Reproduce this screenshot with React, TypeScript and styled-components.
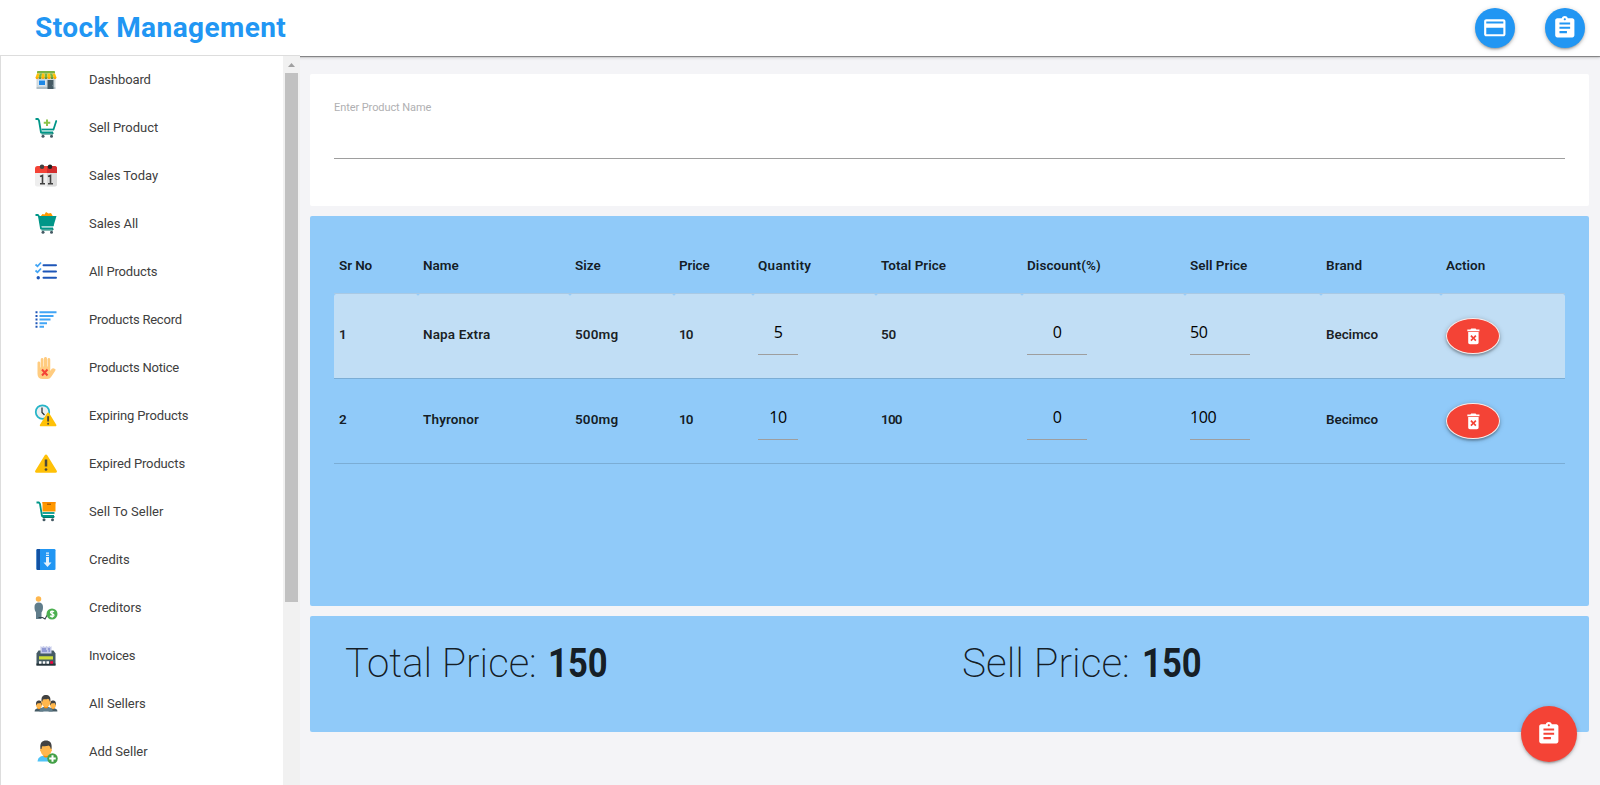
import React from "react";
import styled, { createGlobalStyle } from "styled-components";
import { FcShop } from "react-icons/fc";
import { MdPayment, MdAssignment, MdDeleteForever } from "react-icons/md";

const GlobalStyle = createGlobalStyle`
  *, *::before, *::after { box-sizing: border-box; }
  body {
    margin: 0;
    background: #f4f4f7;
    color: rgba(0, 0, 0, 0.87);
    font-family: Roboto, "Liberation Sans", sans-serif;
    overflow: hidden;
  }
`;

const Page = styled.div`
  display: flex;
  flex-direction: column;
  height: 785px;
`;

const Header = styled.header`
  position: relative;
  flex: none;
  height: 56px;
  display: flex;
  align-items: center;
  padding: 0 15px 0 35px;
  background: #fff;
  box-shadow: 0 1px 1px rgba(0, 0, 0, 0.38), 0 2px 3px rgba(0, 0, 0, 0.14);
`;

const Brand = styled.h1`
  flex: 1;
  margin: 0;
  font-size: 28px;
  line-height: 54px;
  font-weight: 700;
  letter-spacing: 0.42px;
  color: #2196f3;
`;

const HeaderActions = styled.div`
  display: flex;
  gap: 30px;
`;

const RoundButton = styled.button<{ $size: number; $color: string }>`
  width: ${(p) => p.$size}px;
  height: ${(p) => p.$size}px;
  display: flex;
  align-items: center;
  justify-content: center;
  padding: 0;
  border: 0;
  border-radius: 50%;
  background: ${(p) => p.$color};
  color: #fff;
  font-size: 25.6px;
  box-shadow: 0 2px 2px rgba(0, 0, 0, 0.14), 0 3px 1px -2px rgba(0, 0, 0, 0.12),
    0 1px 5px rgba(0, 0, 0, 0.2);
`;

const FloatingAction = styled.div`
  position: fixed;
  right: 23px;
  bottom: 23px;
`;

const Body = styled.div`
  flex: 1;
  min-height: 0;
  display: flex;
`;

const Sidebar = styled.nav`
  position: relative;
  flex: none;
  width: 300px;
  margin-top: -1px;
  display: flex;
  background: #fff;
  border-top: 1px solid #ddd;
  border-left: 1px solid #ddd;
  overflow: hidden;
`;

const MenuList = styled.ul`
  flex: 1;
  margin: 0;
  padding: 0;
  list-style: none;
`;

const MenuItem = styled.li`
  height: 48px;
  display: flex;
  align-items: center;
  gap: 31px;
  padding: 0 0 1px 33px;
  font-size: 13px;
  font-weight: 370;
  color: #404040;

  svg {
    flex: none;
    width: 24px;
    height: 24px;
  }
`;

const MenuLabel = styled.span<{ $spacing: number }>`
  letter-spacing: ${(p) => p.$spacing}px;
  white-space: nowrap;
`;

const ScrollTrack = styled.div`
  width: 17px;
  display: flex;
  flex-direction: column;
  align-items: center;
  background: #f1f1f1;
`;

const ScrollArrow = styled.svg`
  width: 7px;
  height: 4px;
  margin: 7px 0 6px;
`;

const ScrollThumb = styled.div`
  width: 13px;
  height: 529px;
  background: #c1c1c1;
`;

const Main = styled.main`
  flex: 1;
  display: flex;
  flex-direction: column;
  gap: 10px;
  padding: 18px 11px 0 10px;
`;

const Card = styled.section<{ $height: number; $blue?: boolean }>`
  height: ${(p) => p.$height}px;
  padding: 24px;
  border-radius: 2px;
  background: ${(p) => (p.$blue ? "#90caf9" : "#fff")};
`;

const Field = styled.label`
  height: 61px;
  display: block;
  padding-top: 2px;
  border-bottom: 1px solid #9e9e9e;
  font-size: 11px;
  line-height: 16px;
  letter-spacing: -0.08px;
  color: #b0b0b2;
`;

const Table = styled.table`
  width: 1231px;
  table-layout: fixed;
  border-collapse: separate;
  border-spacing: 0;
  font-size: 13.5px;
  font-weight: 600;
  text-align: left;
`;

const HeadCell = styled.th<{ $width: number; $spacing: number }>`
  width: ${(p) => p.$width}px;
  height: 54px;
  padding: 0 5px 4px;
  border-bottom: 1px solid #a9c9e4;
  font-weight: 600;
  letter-spacing: ${(p) => p.$spacing}px;
`;

const Row = styled.tr<{ $striped: boolean }>`
  td {
    background: ${(p) => (p.$striped ? "rgba(242, 242, 242, 0.5)" : "none")};
    background-clip: padding-box;
  }
`;

const Cell = styled.td<{ $spacing?: number }>`
  height: 85px;
  padding: 0 5px 4px;
  border-bottom: 1px solid rgba(0, 0, 0, 0.14);
  border-radius: 2px 2px 0 0;
  vertical-align: middle;
  letter-spacing: ${(p) => p.$spacing ?? -0.1}px;
`;

const ActionCell = styled(Cell)`
  padding-bottom: 0;
`;

const CellInput = styled.input<{ $width: number; $align: string }>`
  display: block;
  width: ${(p) => p.$width}px;
  height: 43px;
  margin-top: -1px;
  padding: 0 0 2px;
  border: 0;
  border-bottom: 1px solid #9e9e9e;
  outline: 0;
  background: transparent;
  font: 370 16px "Open Sans", "Noto Sans", sans-serif;
  letter-spacing: -0.4px;
  color: #000;
  text-align: ${(p) => p.$align};
`;

const DeleteButton = styled.button`
  width: 54px;
  height: 36px;
  display: flex;
  align-items: center;
  justify-content: center;
  padding: 1px 0 0;
  border: 1px solid #f5eeee;
  border-radius: 50%;
  background: #f44336;
  color: #fff;
  font-size: 20.8px;
  box-shadow: 0 2px 2px rgba(0, 0, 0, 0.2), 0 1px 5px rgba(0, 0, 0, 0.25);
`;

const Totals = styled.div`
  display: grid;
  grid-template-columns: 617px 1fr;
  padding-left: 11px;
`;

const Total = styled.div`
  display: flex;
  font-size: 41px;
  line-height: 46px;
  white-space: nowrap;
`;

const TotalLabel = styled.span<{ $width: number; $scale: number }>`
  width: ${(p) => p.$width}px;
  font-weight: 200;
  transform: scaleX(${(p) => p.$scale});
  transform-origin: left;
`;

const TotalValue = styled.strong`
  font-weight: 700;
  transform: scaleX(0.845);
  transform-origin: left;
`;

const Glyph = ({ children }: { children: React.ReactNode }) => (
  <svg viewBox="0 0 48 48" aria-hidden="true">{children}</svg>
);

const CartFrame = () => (
  <>
    <path d="M3 6h5l2 3 4 24h24" fill="none" stroke="#009688" strokeWidth="3.6" strokeLinejoin="round" />
    <path d="M15 27h24" stroke="#009688" strokeWidth="3.5" />
    <path d="M38 33v3H15" fill="none" stroke="#00796b" strokeWidth="2" />
    <circle cx="18" cy="40.5" r="3" fill="#455a64" />
    <circle cx="35" cy="40.5" r="3" fill="#455a64" />
  </>
);

const CartPlusIcon = () => (
  <Glyph>
    <CartFrame />
    <path d="M39 27l5.500-17" stroke="#009688" strokeWidth="3.600" strokeLinecap="round" />
    <path d="M26 7v13M19.500 13.500h13" stroke="#8bc34a" strokeWidth="4" />
  </Glyph>
);

const CalendarIcon = () => (
  <Glyph>
    <path d="M2 17h44v24a4 4 0 0 1-4 4H6a4 4 0 0 1-4-4z" fill="#eee" />
    <path d="M26 17h20v24a4 4 0 0 1-4 4H26z" fill="#dcdcdc" />
    <path d="M2 18V9a5 5 0 0 1 5-5h34a5 5 0 0 1 5 5v9z" fill="#f44336" />
    <path d="M26 4h15a5 5 0 0 1 5 5v9H26z" fill="#d32f2f" />
    <circle cx="16" cy="5.500" r="4.500" fill="#424242" />
    <circle cx="32" cy="5.500" r="4.500" fill="#212121" />
    <path d="M12 25l5-2v17M12 39.500h10M28 25l5-2v17M28 39.500h10" fill="none" stroke="#424242" strokeWidth="3.200" />
  </Glyph>
);

const CartFullIcon = () => (
  <Glyph>
    <path d="M13 9l4-5 4 1 3-5 5 3 5-1 4 7z" fill="#ff9800" />
    <CartFrame />
    <path d="M9 8h36l-6 20H13z" fill="#009688" />
  </Glyph>
);

const ChecklistIcon = () => (
  <Glyph>
    <path d="M19 10.500h25M19 23h25M19 35.500h25" stroke="#1e56b8" strokeWidth="4" strokeLinecap="round" />
    <path d="M3 9l4 3.500L14 5M3 21l4 3.500L14 17" fill="none" stroke="#42a5f5" strokeWidth="3.500" />
    <circle cx="8.500" cy="35.500" r="3.400" fill="#1e56b8" />
  </Glyph>
);

const RecordIcon = () => (
  <Glyph>
    <path d="M11 8.500h34M11 16h28M11 23h22M11 30.500h15M11 37.500h9" stroke="#42a5f5" strokeWidth="4" />
    <path d="M3 8.500h4M3 16h4M3 23h4M3 30.500h4M3 37.500h4" stroke="#1e56b8" strokeWidth="4" />
  </Glyph>
);

const HandIcon = () => (
  <Glyph>
    <path
      d="M7 14c0-4 5.500-4 5.500 0v9h1V7c0-4 5.500-4 5.500 0v14h1V5c0-4 6-4 6 0v16h1V7c0-4 5.500-4 5.500 0v23c3-5 5-6 7-5 5 1 4 3 2 6l-6 9c-4 6-6 6-12 6h-6c-7 0-10.500-4-10.500-10z"
      fill="#ffcc80"
    />
    <path d="M16 27l11 12M27 27L16 39" stroke="#f44336" strokeWidth="4" />
  </Glyph>
);

const WarningShape = ({ transform }: { transform?: string }) => (
  <g transform={transform}>
    <path d="M21.500 6.500c1-2 4-2 5 0l19 31c1 2 0 4-2.500 4H5c-2.500 0-3.500-2-2.500-4z" fill="#ffc107" />
    <path d="M24 15v14" stroke="#4e4a38" strokeWidth="5" />
    <circle cx="24" cy="35" r="2.700" fill="#4e4a38" />
  </g>
);

const ExpiringIcon = () => (
  <Glyph>
    <circle cx="17" cy="16" r="13.500" fill="#eceff1" stroke="#26b5c8" strokeWidth="3.500" />
    <path d="M16 7v10l5 5" fill="none" stroke="#263238" strokeWidth="2.500" />
    <WarningShape transform="translate(10 13) scale(.76)" />
  </Glyph>
);

const WarningIcon = () => (
  <Glyph>
    <WarningShape />
  </Glyph>
);

const CartBoxIcon = () => (
  <Glyph>
    <g transform="translate(2 -1)">
      <CartFrame />
    </g>
    <path d="M17 4h26v19H17z" fill="#ff9800" />
    <path d="M17 4h26v3H17z" fill="#fb8c00" />
    <path d="M26 8.500h8" stroke="#a65800" strokeWidth="2.500" />
  </Glyph>
);

const CreditsIcon = () => (
  <Glyph>
    <rect x="5" y="2" width="38" height="42" rx="2.500" fill="#2196f3" />
    <path d="M7 2h5v42H7a2 2 0 0 1-2-2V4a2 2 0 0 1 2-2z" fill="#1251a3" />
    <path d="M24 9h6v2.500h-6zM24 13.500h6V16h-6zM24 18h6v11h5l-8 9-8-9h5z" fill="#e3f2fd" />
  </Glyph>
);

const CreditorIcon = () => (
  <Glyph>
    <circle cx="9" cy="6" r="5.500" fill="#ffb74d" />
    <path d="M1 22c0-6 3-9 8.500-9s8.500 3 8.500 9c0 5-1 8-3 11v13H4V33c-2-3-3-6-3-11z" fill="#607d8b" />
    <path d="M9 43h8l5 3 5-9h5" fill="none" stroke="#37474f" strokeWidth="2.200" />
    <circle cx="36" cy="36" r="11" fill="#4caf50" />
    <path d="M40 32c-2-2.500-7-2-7 1s7 2.500 7 5.500-5.500 3.500-8 1M36.300 29v14.500" fill="none" stroke="#fff" strokeWidth="2.400" />
  </Glyph>
);

const InvoiceIcon = () => (
  <Glyph>
    <path d="M9 13h30l4 6v24H5V19z" fill="#455a64" />
    <path d="M5 39h38v4H5z" fill="#263238" />
    <path d="M13 4l3 2 3-2 3 2 3-2 3 2 3-2 2 2 2-2v15H13z" fill="#c5cae9" />
    <path d="M16 10h8M28 10h4M16 14h10M29 14h3" stroke="#5c6bc0" strokeWidth="2" />
    <path d="M10 24.500h28V31H10z" fill="#cddc39" />
    <path d="M10 34.500h5v5h-5zM17.500 34.500h5v5h-5zM25 34.500h5v5h-5z" fill="#fff" />
    <path d="M32.500 34.500H38v5h-5.500z" fill="#f5003d" />
  </Glyph>
);

const Person = ({ transform, shirt }: { transform?: string; shirt: string }) => (
  <g transform={transform}>
    <path d="M7 43c1-8 5-10 12-12h10c7 2 12 4 12 12z" fill={shirt} />
    <path d="M19 27h10v5c-1 4-9 4-10 0z" fill="#fb8c00" />
    <path d="M13 18c0-3 1-9 11-9s11 6 11 9c1.500 0 1.500 5-.5 5-1 6-6 9-10.500 9s-9.500-3-10.500-9c-2 0-2-5-.5-5z" fill="#ffb74d" />
    <path d="M13 18C11 5 17 1 24 1s13 4 11 17l-2-1c0-4-2-5-4-6-3 2-11 1-13 2l-1 5z" fill="#424242" />
  </g>
);

const TeamIcon = () => (
  <Glyph>
    <Person transform="translate(-2.500 16.500) scale(.52)" shirt="#455a64" />
    <Person transform="translate(25.500 16.500) scale(.52)" shirt="#455a64" />
    <Person transform="translate(5 5) scale(.79)" shirt="#607d8b" />
  </Glyph>
);

const AddPersonIcon = () => (
  <Glyph>
    <Person shirt="#4fc3f7" />
    <circle cx="37" cy="37" r="10.500" fill="#43a047" />
    <path d="M37 30.500v13M30.500 37h13" stroke="#fff" strokeWidth="4" />
  </Glyph>
);

const menu: { label: string; icon: React.ReactNode; spacing: number }[] = [
  { label: "Dashboard", icon: <FcShop />, spacing: -0.12 },
  { label: "Sell Product", icon: <CartPlusIcon />, spacing: -0.04 },
  { label: "Sales Today", icon: <CalendarIcon />, spacing: -0.04 },
  { label: "Sales All", icon: <CartFullIcon />, spacing: -0.04 },
  { label: "All Products", icon: <ChecklistIcon />, spacing: -0.15 },
  { label: "Products Record", icon: <RecordIcon />, spacing: -0.22 },
  { label: "Products Notice", icon: <HandIcon />, spacing: -0.22 },
  { label: "Expiring Products", icon: <ExpiringIcon />, spacing: -0.14 },
  { label: "Expired Products", icon: <WarningIcon />, spacing: -0.14 },
  { label: "Sell To Seller", icon: <CartBoxIcon />, spacing: 0.04 },
  { label: "Credits", icon: <CreditsIcon />, spacing: -0.07 },
  { label: "Creditors", icon: <CreditorIcon />, spacing: -0.04 },
  { label: "Invoices", icon: <InvoiceIcon />, spacing: -0.22 },
  { label: "All Sellers", icon: <TeamIcon />, spacing: -0.02 },
  { label: "Add Seller", icon: <AddPersonIcon />, spacing: 0 },
];

const columns = [
  { label: "Sr No", width: 84, spacing: -0.1 },
  { label: "Name", width: 152, spacing: -0.05 },
  { label: "Size", width: 104, spacing: 0 },
  { label: "Price", width: 79, spacing: -0.15 },
  { label: "Quantity", width: 123, spacing: 0.3 },
  { label: "Total Price", width: 146, spacing: 0.02 },
  { label: "Discount(%)", width: 163, spacing: 0.08 },
  { label: "Sell Price", width: 136, spacing: 0 },
  { label: "Brand", width: 120, spacing: 0.1 },
  { label: "Action", width: 124, spacing: 0 },
];

const rows = [
  { name: "Napa Extra", size: "500mg", price: 10, quantity: 5, total: 50, discount: 0, sell: 50, brand: "Becimco" },
  { name: "Thyronor", size: "500mg", price: 10, quantity: 10, total: 100, discount: 0, sell: 100, brand: "Becimco" },
];

export default function App() {
  return (
    <Page>
      <GlobalStyle />
      <Header>
        <Brand>Stock Management</Brand>
        <HeaderActions>
          <RoundButton $size={40} $color="#2196f3" aria-label="Payments"><MdPayment /></RoundButton>
          <RoundButton $size={40} $color="#2196f3" aria-label="Orders"><MdAssignment /></RoundButton>
        </HeaderActions>
      </Header>
      <Body>
        <Sidebar>
          <MenuList>
            {menu.map((item) => (
              <MenuItem key={item.label}>
                {item.icon}
                <MenuLabel $spacing={item.spacing}>{item.label}</MenuLabel>
              </MenuItem>
            ))}
          </MenuList>
          <ScrollTrack>
            <ScrollArrow viewBox="0 0 7 4"><path d="M0 4L3.500 0 7 4z" fill="#a0a0a0" /></ScrollArrow>
            <ScrollThumb />
          </ScrollTrack>
        </Sidebar>
        <Main>
          <Card $height={132}>
            <Field>Enter Product Name</Field>
          </Card>
          <Card $height={390} $blue>
            <Table>
              <thead>
                <tr>
                  {columns.map((c) => (
                    <HeadCell key={c.label} $width={c.width} $spacing={c.spacing}>{c.label}</HeadCell>
                  ))}
                </tr>
              </thead>
              <tbody>
                {rows.map((r, i) => (
                  <Row key={r.name} $striped={i % 2 === 0}>
                    <Cell>{i + 1}</Cell>
                    <Cell $spacing={0.15}>{r.name}</Cell>
                    <Cell $spacing={0.15}>{r.size}</Cell>
                    <Cell $spacing={-0.9}>{r.price}</Cell>
                    <Cell><CellInput $width={40} $align="center" defaultValue={r.quantity} /></Cell>
                    <Cell $spacing={r.total > 99 ? -0.8 : -0.2}>{r.total}</Cell>
                    <Cell><CellInput $width={60} $align="center" defaultValue={r.discount} /></Cell>
                    <Cell><CellInput $width={60} $align="left" defaultValue={r.sell} /></Cell>
                    <Cell $spacing={-0.1}>{r.brand}</Cell>
                    <ActionCell><DeleteButton aria-label="Delete"><MdDeleteForever /></DeleteButton></ActionCell>
                  </Row>
                ))}
              </tbody>
            </Table>
          </Card>
          <Card $height={116} $blue>
            <Totals>
              <Total>
                <TotalLabel $width={203} $scale={0.98}>Total Price:</TotalLabel>
                <TotalValue>150</TotalValue>
              </Total>
              <Total>
                <TotalLabel $width={180} $scale={0.99}>Sell Price:</TotalLabel>
                <TotalValue>150</TotalValue>
              </Total>
            </Totals>
          </Card>
        </Main>
      </Body>
      <FloatingAction>
        <RoundButton $size={56} $color="#f44336" aria-label="New order"><MdAssignment /></RoundButton>
      </FloatingAction>
    </Page>
  );
}
